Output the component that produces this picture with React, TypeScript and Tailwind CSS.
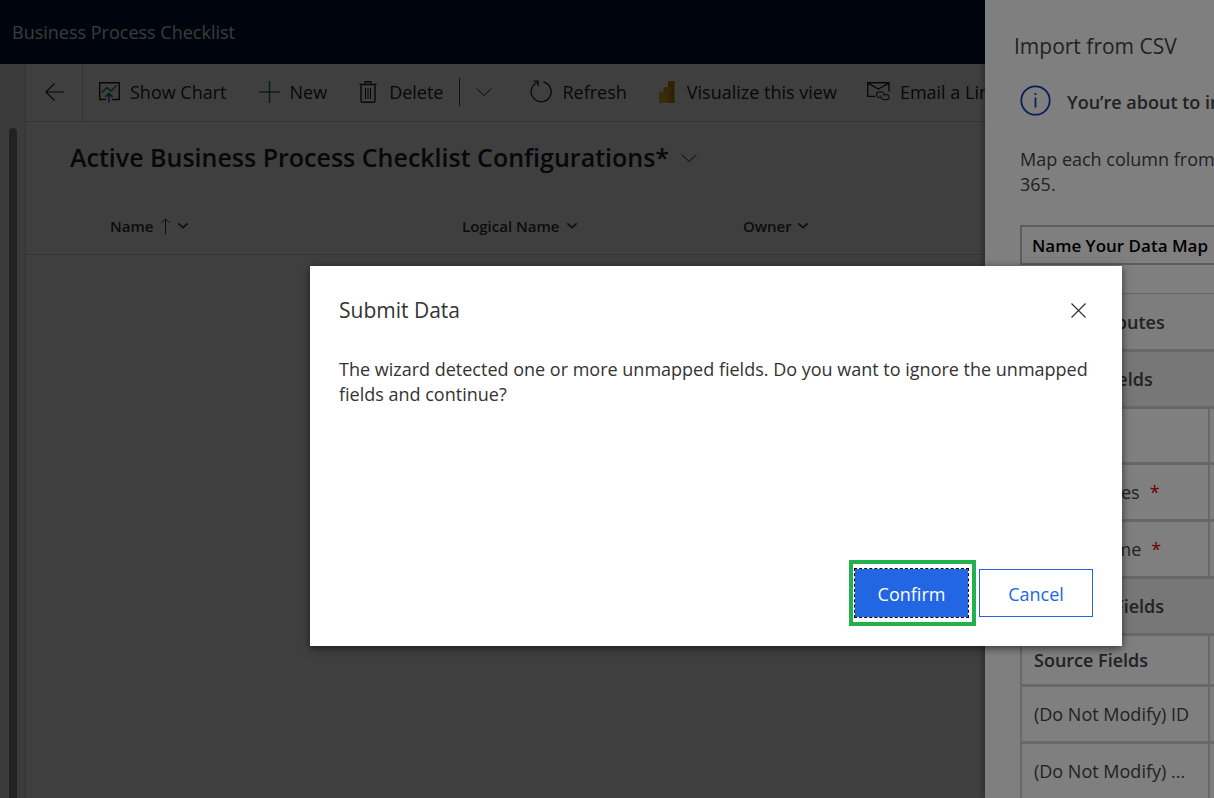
import React from "react";

const SANS = "font-['Open_Sans','Noto_Sans',sans-serif]";

function Chevron({ size = 16, stroke = 1 }: { size?: number; stroke?: number }) {
  return (
    <svg className="shrink-0" width={size} height={size / 2} viewBox="0 0 16 8" fill="none" stroke="currentColor" strokeWidth={stroke} overflow="visible" aria-hidden="true">
      <path d="M0.5 0.5 8 7.5 15.5 0.5" />
    </svg>
  );
}

function ChartIcon() {
  return (
    <svg width="21" height="22" viewBox="0 0 21 22" fill="none" aria-hidden="true">
      <path d="M7 18.5H0.7V1.7H20.3V18.5H13" stroke="#222" strokeWidth="1.4" />
      <path d="M3 11.5 8 6.5 12 10 17.5 4.5" stroke="#0e8a3e" strokeWidth="1.5" />
      <path d="M10 21.5V13M6.5 16 10 12.5 13.5 16" stroke="#1468b8" strokeWidth="1.6" />
    </svg>
  );
}

function PlusIcon() {
  return (
    <svg width="21" height="22" viewBox="0 0 21 22" stroke="#0e8a3e" strokeWidth="1.6" aria-hidden="true">
      <path d="M10.5 0V22M0 11H21" />
    </svg>
  );
}

function TrashIcon() {
  return (
    <svg className="mr-0.5" width="18" height="22" viewBox="0 0 18 22" fill="none" stroke="currentColor" strokeWidth="1.4" aria-hidden="true">
      <path d="M0.5 3.5H17.5M6 3.5V1.5Q6 0.8 6.7 0.8H11.3Q12 0.8 12 1.5V3.5M2 3.5V20Q2 21.3 3.3 21.3H14.7Q16 21.3 16 20V3.5" />
      <path d="M6.5 7V18M9 7V18M11.5 7V18" strokeWidth="1" />
    </svg>
  );
}

function RefreshIcon() {
  return (
    <svg width="22" height="23" viewBox="0 0 22 23" fill="none" stroke="currentColor" strokeWidth="1.3" aria-hidden="true">
      <path d="M13.5 2A10 10 0 1 1 7.8 2.3M3.5 1.2H8.2V6" />
    </svg>
  );
}

function PowerBiIcon() {
  return (
    <svg className="mr-0.5" width="16" height="22" viewBox="0 0 16 22" aria-hidden="true">
      <path d="M9 0H15.5V22H9Z" fill="#bd850a" />
      <path d="M4.5 6H11.5V22H4.5Z" fill="#d6a31a" />
      <path d="M0 11H7.5V22H0Z" fill="#dfb63c" />
    </svg>
  );
}

function MailLinkIcon() {
  return (
    <svg width="23" height="19" viewBox="0 0 23 19" fill="none" stroke="currentColor" aria-hidden="true">
      <path d="M8 14.4H0.7V0.8H22V9.5M0.7 1.2 11.3 7 22 1.2" strokeWidth="1.4" />
      <path d="M14 15.3H12.2A2.7 2.7 0 0 1 12.2 9.9H14.5A2.7 2.7 0 0 1 16.8 14M17.5 12.3H19.3A2.7 2.7 0 0 1 19.3 17.7H16.5A2.7 2.7 0 0 1 14.3 13.5" strokeWidth="1.2" stroke="#444" />
    </svg>
  );
}

function Command({ icon, label, className = "" }: { icon: React.ReactNode; label: string; className?: string }) {
  return (
    <button type="button" className={`flex shrink-0 items-center gap-2.5 whitespace-nowrap ${className}`}>
      {icon}
      <span>{label}</span>
    </button>
  );
}

function CommandBar() {
  return (
    <div className="flex h-[58px] items-stretch border-b border-[#d2d2d2] text-lg text-[#222]">
      <button type="button" aria-label="Back" className="flex w-[57px] shrink-0 items-center justify-center border-r border-[#d2d2d2] pb-0.5">
        <svg width="19" height="18" viewBox="0 0 19 18" fill="none" stroke="currentColor" strokeWidth="1.2" aria-hidden="true">
          <path d="M19 9H1M9.5 0.5 1 9 9.5 17.5" />
        </svg>
      </button>
      <div className="flex items-stretch pb-0.5 pl-4">
        <Command icon={<ChartIcon />} label="Show Chart" />
        <Command className="ml-8" icon={<PlusIcon />} label="New" />
        <Command className="ml-8" icon={<TrashIcon />} label="Delete" />
        <span className="mx-4 h-7 w-px shrink-0 self-center bg-[#444]" />
        <button type="button" aria-label="More delete options" className="flex items-center">
          <Chevron />
        </button>
        <Command className="ml-[38px]" icon={<RefreshIcon />} label="Refresh" />
        <Command className="ml-8" icon={<PowerBiIcon />} label="Visualize this view" />
        <Command className="ml-[30px]" icon={<MailLinkIcon />} label="Email a Link" />
      </div>
    </div>
  );
}

function Workspace() {
  return (
    <div className="flex h-full flex-col bg-white">
      <header className="flex h-16 shrink-0 items-center bg-[#001030] px-3 text-lg text-[#e8e8e8]">
        Business Process Checklist
      </header>
      <div className="flex min-h-0 flex-1">
        <nav aria-label="Site map" className="flex w-[26px] shrink-0 justify-center border-r border-[#d6d6d6] bg-[#efefef] pt-16">
          <div className="w-2 rounded-t bg-[#888]" />
        </nav>
        <main className="min-w-0 flex-1 overflow-hidden">
          <CommandBar />
          <h1 className="flex h-[72px] items-center gap-3 pl-11 text-[25px] font-semibold whitespace-nowrap text-[#222]">
            Active Business Process Checklist Configurations*
            <Chevron />
          </h1>
          <table className="w-full table-fixed border-b border-[#d2d2d2] text-left text-[15px] text-[#333]">
            <thead>
              <tr className="h-[60px]">
                <th scope="col" className="w-[436px] pt-1 pl-[84px] font-semibold">
                  <span className="flex items-center gap-2">
                    Name
                    <svg width="9" height="16" viewBox="0 0 9 16" fill="none" stroke="currentColor" aria-hidden="true">
                      <path d="M4.5 16V1M0.5 5 4.5 1 8.5 5" />
                    </svg>
                    <Chevron size={10} stroke={2.5} />
                  </span>
                </th>
                <th scope="col" className="w-[281px] pt-1 font-semibold">
                  <span className="flex items-center gap-2">Logical Name <Chevron size={10} stroke={2.5} /></span>
                </th>
                <th scope="col" className="pt-1 font-semibold">
                  <span className="flex items-center gap-1.5">Owner <Chevron size={10} stroke={2.5} /></span>
                </th>
              </tr>
            </thead>
          </table>
        </main>
      </div>
    </div>
  );
}

type Row = { label: string; kind: "head" | "section" | "sub" | "field" | "blank"; required?: boolean };

const rows: Row[] = [
  { label: "Map Attributes", kind: "head" },
  { label: "Default Fields", kind: "section" },
  { label: "", kind: "blank" },
  { label: "Status Types", kind: "field", required: true },
  { label: "Status Name", kind: "field", required: true },
  { label: "Optional Fields", kind: "section" },
  { label: "Source Fields", kind: "sub" },
  { label: "(Do Not Modify) ID", kind: "field" },
  { label: "(Do Not Modify) ...", kind: "field" },
];

const rowHeights = {
  head: "h-[57px]",
  section: "h-[57px]",
  field: "h-[57px]",
  blank: "h-14",
  sub: "h-[51px]",
};

function MappingTable() {
  return (
    <table className="mt-7 w-full table-fixed border-collapse border-x-2 border-t border-[#d0d0d0] text-left text-lg text-[#444]">
      <colgroup>
        <col className="w-[188px]" />
        <col />
      </colgroup>
      <tbody>
        {rows.map((row, i) =>
          row.kind === "head" || row.kind === "section" ? (
            <tr key={i} className={`border-b-3 border-[#d0d0d0] ${rowHeights[row.kind]} ${row.kind === "section" ? "bg-[#eee]" : "bg-[#fbfbfb]"}`}>
              <th scope="rowgroup" colSpan={2} className="px-3 font-semibold">{row.label}</th>
            </tr>
          ) : (
            <tr key={i} className={`border-b-3 border-[#d0d0d0] ${rowHeights[row.kind]}`}>
              <th scope="row" className={`border-r-2 border-[#d0d0d0] px-3 whitespace-nowrap ${row.kind === "sub" ? "font-semibold" : "font-normal"}`}>
                {row.label}
                {row.required && <span className="ml-2.5 text-[#e00000]">*</span>}
              </th>
              <td />
            </tr>
          ),
        )}
      </tbody>
    </table>
  );
}

function ImportPanel() {
  return (
    <aside className="absolute inset-y-0 right-0 w-[229px] overflow-hidden bg-white text-[#444] shadow-[0_0_8px_rgba(0,0,0,0.5)]">
      <div className="w-[600px]">
        <h2 className="pt-7 pl-[29px] text-[21px] leading-9">Import from CSV</h2>
        <div className="pl-[35px]">
          <div className="mt-5 flex items-center gap-4">
            <svg width="31" height="31" viewBox="0 0 31 31" fill="none" stroke="#0a3fae" strokeWidth="1.8" aria-hidden="true">
              <circle cx="15.5" cy="15.5" r="14.2" />
              <path d="M15.5 12.5V22.5M15.5 8V10" />
            </svg>
            <p className="pt-1 text-lg font-semibold">You’re about to import</p>
          </div>
          <p className="mt-[31px] text-lg leading-[25px]">
            Map each column from
            <br />
            365.
          </p>
          <input aria-label="Name Your Data Map" defaultValue="Name Your Data Map" className="mt-7 block h-10 w-full border-2 border-[#bbb] bg-white px-2.5 text-[17px] font-semibold text-black" />
          <MappingTable />
        </div>
      </div>
    </aside>
  );
}

function ConfirmDialog() {
  return (
    <section role="dialog" aria-modal="true" aria-labelledby="dialog-title" className="absolute top-[266px] left-[310px] flex min-h-[380px] w-[812px] flex-col bg-white px-[29px] pt-[26px] pb-5 text-[#333] shadow-[0_2px_8px_rgba(0,0,0,0.6)]">
      <div className="flex items-center justify-between pr-[7px]">
        <h2 id="dialog-title" className="text-[21px] leading-9">Submit Data</h2>
        <button type="button" aria-label="Close">
          <svg width="15" height="15" viewBox="0 0 15 15" stroke="currentColor" strokeWidth="1.2" aria-hidden="true">
            <path d="M0.5 0.5 14.5 14.5M14.5 0.5 0.5 14.5" />
          </svg>
        </button>
      </div>
      <p className="mt-[29px] text-lg leading-[25px]">
        The wizard detected one or more unmapped fields. Do you want to ignore the unmapped fields and continue?
      </p>
      <div className="mt-auto flex items-center justify-end gap-[3px] text-lg">
        <div className="border-4 border-[#22b14c] py-1 pr-[3px] pl-px">
          <button type="button" className="block h-[50px] w-[115px] border border-dashed border-black bg-[#2266e3] bg-clip-padding pt-0.5 text-white">Confirm</button>
        </div>
        <button type="button" className="h-12 w-[114px] border border-[#2266e3] bg-white pt-0.5 text-[#2266e3]">Cancel</button>
      </div>
    </section>
  );
}

export default function App() {
  return (
    <div className={`relative h-screen overflow-hidden ${SANS}`}>
      <Workspace />
      <div className="absolute inset-0 bg-black/50" />
      <ImportPanel />
      <div className="absolute inset-0 bg-black/50" />
      <ConfirmDialog />
    </div>
  );
}
